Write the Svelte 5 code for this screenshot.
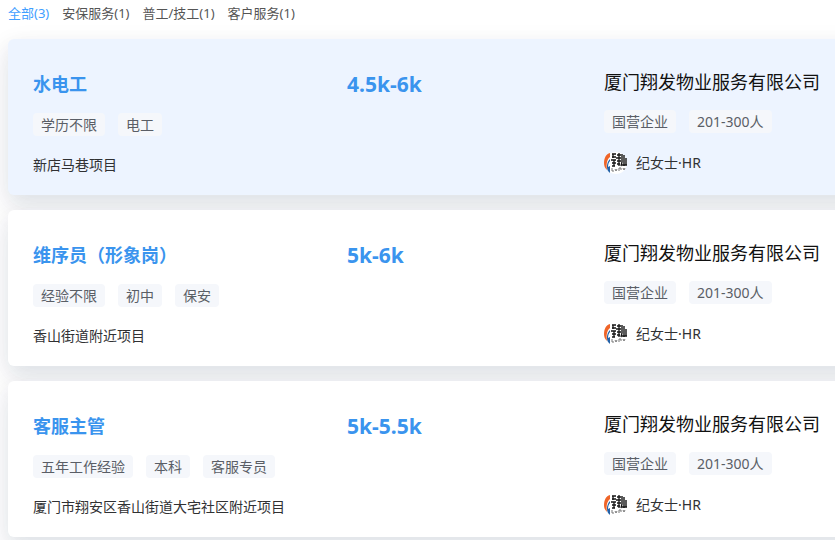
<script>
    const jobs = [
        {
            title: '水电工',
            salary: '4.5k-6k',
            tags: ['学历不限', '电工'],
            place: '新店马巷项目'
        },
        {
            title: '维序员（形象岗）',
            salary: '5k-6k',
            tags: ['经验不限', '初中', '保安'],
            place: '香山街道附近项目'
        },
        {
            title: '客服主管',
            salary: '5k-5.5k',
            tags: ['五年工作经验', '本科', '客服专员'],
            place: '厦门市翔安区香山街道大宅社区附近项目'
        }
    ];

    const company = {
        name: '厦门翔发物业服务有限公司',
        tags: ['国营企业', '201-300人'],
        contact: '纪女士·HR'
    };

    const filters = [
        { label: '全部', count: 3 },
        { label: '安保服务', count: 1 },
        { label: '普工/技工', count: 1 },
        { label: '客户服务', count: 1 }
    ];

    let activeFilter = $state(0);
    let activeJob = $state(0);
</script>

<main class="job-page">
    <nav class="filters">
        {#each filters as filter, i}
            <button class="filter" class:active={activeFilter === i} onclick={() => (activeFilter = i)}>{filter.label}({filter.count})</button>
        {/each}
    </nav>

    <div class="job-list">
        {#each jobs as job, i}
            <!-- svelte-ignore a11y_no_static_element_interactions -->
            <article class="job-card" class:active={activeJob === i} onmouseenter={() => (activeJob = i)}>
                <div class="job-info">
                    <h2 class="job-title">{job.title}</h2>
                    <div class="tags">
                        {#each job.tags as tag}
                            <span class="tag">{tag}</span>
                        {/each}
                    </div>
                    <div class="place">{job.place}</div>
                </div>

                <div class="salary">{job.salary}</div>

                <div class="company">
                    <h3 class="company-name">{company.name}</h3>
                    <div class="tags">
                        {#each company.tags as tag}
                            <span class="tag">{tag}</span>
                        {/each}
                    </div>
                    <div class="contact">
                        <svg class="avatar" viewBox="0 0 24 24" aria-hidden="true">
                            <circle cx="12" cy="13" r="11" fill="#fff" />
                            <path d="M6 3C2 4 0 8 0 13c0 3 1 5 3 7C2 14 3 9 6 7z" fill="#ef6428" />
                            <path d="M6 9c-3 3-4 8-2 12l2 2v-7l-2 1c0-3 1-5 2-6z" fill="#2462a8" />
                            <g fill="none" stroke="#151515">
                                <path d="M8 4h4M8 7h4M7 10h5M8 13h4M8 16h3M9 4v4M10 10v6" stroke-width="1.3" />
                                <path d="M13 5h4M12 8h5M13 11h4M15 3v13M13 14h3" stroke-width="1.3" />
                                <path d="M18 4v8l-1 4M20 5v11M22 8v7M18 15h5" stroke-width="1.4" />
                                <path d="M8 18v3h2M11 19l1 2 1-2M15 21v-3h2v2M19 18l1 2 1-2" stroke="#777" stroke-width="1" />
                            </g>
                        </svg>
                        <span>{company.contact}</span>
                    </div>
                </div>
            </article>
        {/each}
    </div>
</main>

<style>
    :global(body) {
        margin: 0;
        background: #fff;
    }

    .job-page {
        padding: 3px 0 4px 8px;
        overflow: hidden;
        font-family: "Noto Sans", "Noto Sans CJK SC", sans-serif;
        color: #303133;
    }

    .filters {
        display: flex;
        gap: 13px;
        margin-bottom: 16px;
    }

    .filter {
        padding: 0;
        border: 0;
        background: none;
        font-family: inherit;
        font-size: 13px;
        line-height: 20px;
        color: #555;
        cursor: pointer;
    }

    .filter.active {
        color: #409eff;
    }

    .job-list {
        display: flex;
        flex-direction: column;
        gap: 15px;
        /* the cards run on past the right edge */
        margin-right: -40px;
    }

    .job-card {
        display: grid;
        grid-template-columns: 314fr 257fr 246fr;
        padding: 30px 25px 19px;
        border-radius: 6px;
        background: #fff;
        box-shadow: 0 12px 32px 4px rgba(0, 36, 72, 0.05), 0 8px 20px rgba(0, 36, 72, 0.09);
    }

    .job-card.active {
        background: #edf4ff;
    }

    .job-title,
    .company-name {
        margin: 0;
        font-size: 18px;
        white-space: nowrap;
    }

    .job-title {
        line-height: 31px;
        color: #3a94ee;
    }

    .company-name {
        line-height: 26px;
        font-weight: 400;
        color: #111;
    }

    .salary {
        font-size: 21px;
        line-height: 31px;
        font-weight: 700;
        color: #3a94ee;
    }

    .tags {
        display: flex;
        gap: 13px;
        margin-top: 15px;
    }

    .job-info .tags {
        margin-top: 13px;
    }

    .tag {
        padding: 0 8px;
        border-radius: 4px;
        background: #f5f7fb;
        font-size: 14px;
        line-height: 23px;
        color: #5a5e66;
        white-space: nowrap;
    }

    .place {
        margin-top: 17px;
        font-size: 14px;
        line-height: 23px;
    }

    .contact {
        display: flex;
        align-items: center;
        gap: 8px;
        margin-top: 17px;
        font-size: 14px;
        line-height: 23px;
    }

    .avatar {
        width: 24px;
        height: 24px;
    }
</style>
